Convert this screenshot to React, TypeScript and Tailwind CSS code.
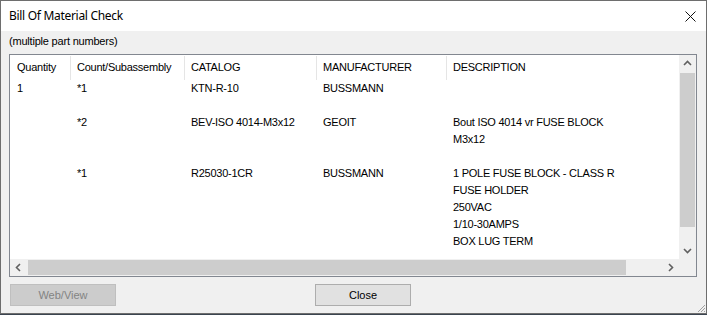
import type { ReactNode } from "react"

const cols = ["w-[60px]", "w-[114px]", "w-[132px]", "w-[130px]", "flex-1"]

const headers = ["Quantity", "Count/Subassembly", "CATALOG", "MANUFACTURER", "DESCRIPTION"]

const rows: string[][][] = [
    [["1"], ["*1"], ["KTN-R-10"], ["BUSSMANN"], []],
    [[], ["*2"], ["BEV-ISO 4014-M3x12"], ["GEOIT"], ["Bout ISO 4014 vr FUSE BLOCK", "M3x12"]],
    [[], ["*1"], ["R25030-1CR"], ["BUSSMANN"], ["1 POLE FUSE BLOCK - CLASS R", "FUSE HOLDER", "250VAC", "1/10-30AMPS", "BOX LUG TERM"]],
]

const Chevron = ({ dir }: { dir: "up" | "down" | "left" | "right" }) => {
    const pts = {
        up: "1,6 4.5,2.5 8,6",
        down: "1,3 4.5,6.5 8,3",
        left: "6,1 2.5,4.5 6,8",
        right: "3,1 6.5,4.5 3,8",
    }[dir]
    return (
        <svg width="9" height="9" viewBox="0 0 9 9">
            <polyline points={pts} fill="none" stroke="#606060" strokeWidth="1.6" />
        </svg>
    )
}

const ArrowBox = ({ children }: { children: ReactNode }) => (
    <div className="w-[17px] h-[17px] flex items-center justify-center shrink-0">{children}</div>
)

const App = () => {
    return (
        <div className="w-[707px] h-[315px] bg-[#3b4450] overflow-hidden text-[11px] text-black" style={{ fontFamily: '"Liberation Sans", Arial, sans-serif' }}>
            <div className="relative w-[707px] h-[314px] border border-[#6e6e6e] bg-[#f0f0f0] flex flex-col">
                {/* title bar */}
                <div className="h-[30px] bg-white flex items-center justify-between pl-[8px] pr-[10px] shrink-0">
                    <div className="text-[12px] tracking-[-0.3px] text-black" style={{ fontFamily: '"Segoe UI", "Noto Sans", sans-serif' }}>Bill Of Material Check</div>
                    <svg width="11" height="11" viewBox="0 0 11 11">
                        <path d="M0.5 0.5 L10.5 10.5 M10.5 0.5 L0.5 10.5" stroke="#111" strokeWidth="1" />
                    </svg>
                </div>

                <div className="pl-[8px] pt-[4px] h-[23px] leading-[13px] tracking-[-0.2px]">(multiple part numbers)</div>

                {/* list view */}
                <div className="ml-[8px] w-[688px] h-[223px] border border-[#828790] flex flex-col shrink-0 tracking-[-0.25px]">
                    <div className="flex h-[204px]">
                        <div className="w-[669px] bg-white overflow-hidden">
                            <div className="flex h-[25px]">
                                {headers.map((h, i) => (
                                    <div key={h} className={`${cols[i]} flex items-center shrink-0 relative ${i === 0 ? "pl-[7px]" : "pl-[7px]"}`}>
                                        {i > 0 && <div className="absolute left-0 top-[1px] bottom-0 w-px bg-[#e5e5e5]" />}
                                        {h}
                                    </div>
                                ))}
                            </div>
                            {rows.map((r, ri) => (
                                <div key={`row-${ri}`} className="flex pb-[17px]">
                                    {r.map((lines, ci) => (
                                        <div key={`cell-${ri}-${ci}`} className={`${cols[ci]} shrink-0 leading-[17px] whitespace-nowrap pl-[7px]`}>
                                            {lines.length === 0 ? <div className="h-[17px]" /> : lines.map((l) => <div key={l}>{l}</div>)}
                                        </div>
                                    ))}
                                </div>
                            ))}
                        </div>
                        {/* vertical scrollbar */}
                        <div className="w-[17px] bg-[#f0f0f0] flex flex-col">
                            <ArrowBox><Chevron dir="up" /></ArrowBox>
                            <div className="flex-1 pt-[1px] pb-[15px] px-[1px]">
                                <div className="h-full bg-[#cdcdcd]" />
                            </div>
                            <ArrowBox><Chevron dir="down" /></ArrowBox>
                        </div>
                    </div>
                    {/* horizontal scrollbar */}
                    <div className="flex h-[17px]">
                        <div className="w-[669px] bg-[#f0f0f0] flex">
                            <ArrowBox><Chevron dir="left" /></ArrowBox>
                            <div className="flex-1 flex py-[1px] pl-[1px]">
                                <div className="w-[598px] bg-[#cdcdcd]" />
                            </div>
                            <ArrowBox><Chevron dir="right" /></ArrowBox>
                        </div>
                        <div className="w-[17px] bg-[#f0f0f0]" />
                    </div>
                </div>

                {/* buttons */}
                <div className="flex pl-[9px] mt-[7px]">
                    <div className="w-[106px] h-[22px] bg-[#cccccc] border border-[#bfbfbf] flex items-center justify-center text-[#838383]">Web/View</div>
                    <div className="ml-[199px] w-[96px] h-[22px] bg-[#e1e1e1] border border-[#adadad] flex items-center justify-center">Close</div>
                </div>

                {/* resize grip */}
                <svg className="absolute right-0 bottom-0" width="10" height="10" viewBox="0 0 10 10">
                    <path d="M9 2 L2 9 M9 5 L5 9 M9 8 L8 9" stroke="#a0a0a0" strokeWidth="1" />
                </svg>
            </div>
        </div>
    )
}
export default App
